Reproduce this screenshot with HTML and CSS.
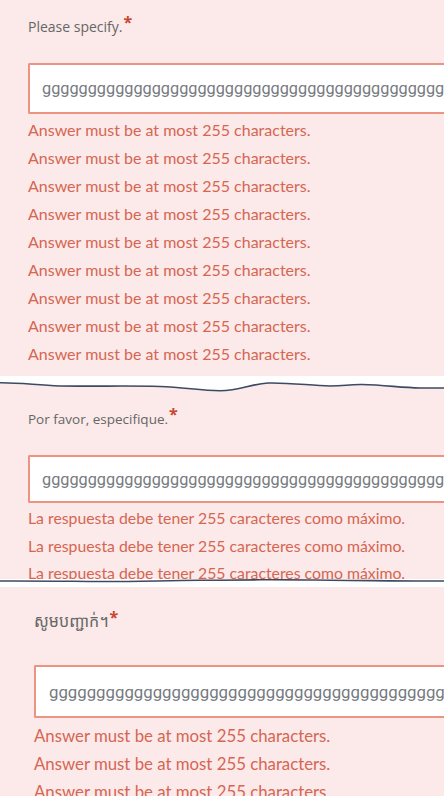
FILE: index.html
```html
<!DOCTYPE html>
<html lang="en">
<head>
<meta charset="utf-8">
<title>Validation errors</title>
<link rel="stylesheet" href="styles.css">
</head>
<body>
<section class="panel panel-one">
  <div class="label">Please specify.<span class="req">*</span></div>
  <div class="field field-one">ggggggggggggggggggggggggggggggggggggggggggggggggggggggggggg</div>
  <ul class="errors">
    <li>Answer must be at most 255 characters.</li>
    <li>Answer must be at most 255 characters.</li>
    <li>Answer must be at most 255 characters.</li>
    <li>Answer must be at most 255 characters.</li>
    <li>Answer must be at most 255 characters.</li>
    <li>Answer must be at most 255 characters.</li>
    <li>Answer must be at most 255 characters.</li>
    <li>Answer must be at most 255 characters.</li>
    <li>Answer must be at most 255 characters.</li>
  </ul>
</section>
<svg class="tear tear-one" width="444" height="18" viewBox="0 0 444 18" preserveAspectRatio="none" aria-hidden="true">
  <path d="M0 6.7 C20 6.5 35 9 60 10 C100 10.5 130 9.5 160 10.5 C185 11.5 200 14.5 220 14.8 C240 14.8 250 8 268 7 C290 6.5 310 9.5 330 10 C345 10 348 8.3 362 8.5 C385 9 400 11.5 420 12 L444 12 L444 18 L0 18 Z" fill="#fbeae9"/>
  <path d="M0 6.7 C20 6.5 35 9 60 10 C100 10.5 130 9.5 160 10.5 C185 11.5 200 14.5 220 14.8 C240 14.8 250 8 268 7 C290 6.5 310 9.5 330 10 C345 10 348 8.3 362 8.5 C385 9 400 11.5 420 12 L444 12" fill="none" stroke="#3c4a63" stroke-width="1.6"/>
</svg>
<section class="panel panel-two">
  <div class="label label-es">Por favor, especifique.<span class="req">*</span></div>
  <div class="field field-two">ggggggggggggggggggggggggggggggggggggggggggggggggggggggggggg</div>
  <ul class="errors errors-two">
    <li>La respuesta debe tener 255 caracteres como máximo.</li>
    <li>La respuesta debe tener 255 caracteres como máximo.</li>
    <li>La respuesta debe tener 255 caracteres como máximo.</li>
  </ul>
</section>
<svg class="tear tear-two" width="444" height="8" viewBox="0 0 444 8" preserveAspectRatio="none" aria-hidden="true">
  <path d="M444 2 C400 2.3 370 1.4 330 1.2 C300 0.9 280 0.6 260 0.8 C235 1.1 220 1.3 200 1.3 C160 1.7 130 2.7 100 2.5 C60 2.2 30 1.8 0 2" fill="none" stroke="#3c4a63" stroke-width="1.6"/>
</svg>
<section class="panel panel-three">
  <div class="label label-km">សូមបញ្ជាក់។<span class="req">*</span></div>
  <div class="field field-three">ggggggggggggggggggggggggggggggggggggggggggggggggggggggggggg</div>
  <ul class="errors errors-three">
    <li>Answer must be at most 255 characters.</li>
    <li>Answer must be at most 255 characters.</li>
    <li>Answer must be at most 255 characters.</li>
  </ul>
</section>
</body>
</html>
```
FILE: styles.css
```css
html, body {
  margin: 0;
  padding: 0;
  background: #ffffff;
  overflow: hidden;
  width: 444px;
  height: 796px;
}

.panel {
  background: #fbeae9;
  overflow: hidden;
}

.panel-one {
  height: 376px;
  box-sizing: border-box;
  padding: 18px 0 0 28px;
}

.panel-two {
  height: 185px;
  box-sizing: border-box;
  padding: 16px 0 0 28px;
}

.panel-three {
  height: 209px;
  box-sizing: border-box;
  padding: 25px 0 0 34px;
}

.tear {
  display: block;
  background: #ffffff;
}

.label {
  font-family: "Open Sans", "Noto Sans", sans-serif;
  font-size: 14px;
  line-height: 16px;
  color: #666666;
}

.label-es {
  font-size: 13.5px;
}

.label-km {
  font-family: "Noto Sans Khmer", "Khmer OS", "Open Sans", sans-serif;
  font-size: 16px;
  line-height: 18px;
}

.req {
  color: #c9452f;
  font-size: 16px;
  font-weight: 700;
  position: relative;
  top: -4px;
  margin-left: 1px;
}

.field {
  box-sizing: border-box;
  width: 600px;
  background: #ffffff;
  border: 2px solid #ec9381;
  border-right: none;
  border-radius: 2px 0 0 2px;
  font-family: Roboto, "Liberation Sans", sans-serif;
  font-size: 16.3px;
  color: #767a80;
  white-space: nowrap;
  overflow: hidden;
  display: flex;
  align-items: center;
}

.field-one {
  margin-top: 28px;
  height: 51px;
  padding-left: 12px;
}

.field-two {
  margin-top: 28px;
  height: 48px;
  padding-left: 12px;
}

.field-three {
  margin-top: 35px;
  height: 53px;
  padding-left: 13px;
  font-size: 16.8px;
}

.errors {
  list-style: none;
  margin: 2px 0 0 0;
  padding: 0;
  font-family: Lato, "Noto Sans", sans-serif;
  font-size: 16px;
  line-height: 28px;
  color: #d66552;
}

.errors-two {
  margin-top: 1px;
  font-size: 15.8px;
  line-height: 27.5px;
}

.errors-three {
  margin-top: 4px;
  font-size: 16.8px;
}
```
